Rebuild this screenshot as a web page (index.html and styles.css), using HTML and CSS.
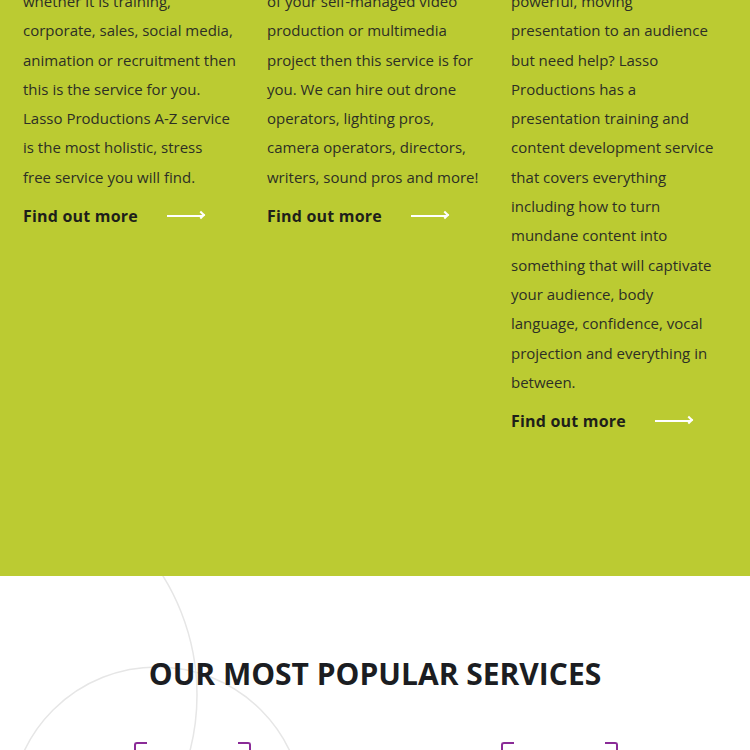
FILE: index.html
```html
<!DOCTYPE html>
<html lang="en">
<head>
<meta charset="utf-8">
<title>Lasso Productions – Services</title>
<link rel="stylesheet" href="styles.css">
</head>
<body>
<section class="green">
  <div class="cols">
    <article class="col">
      <p class="text">whether it is training,<br>corporate, sales, social media,<br>animation or recruitment then<br>this is the service for you.<br>Lasso Productions A-Z service<br>is the most holistic, stress<br>free service you will find.</p>
      <a class="more" href="#">Find out more <span class="arrow"></span></a>
    </article>
    <article class="col">
      <p class="text">of your self-managed video<br>production or multimedia<br>project then this service is for<br>you. We can hire out drone<br>operators, lighting pros,<br>camera operators, directors,<br>writers, sound pros and more!</p>
      <a class="more" href="#">Find out more <span class="arrow"></span></a>
    </article>
    <article class="col">
      <p class="text">powerful, moving<br>presentation to an audience<br>but need help? Lasso<br>Productions has a<br>presentation training and<br>content development service<br>that covers everything<br>including how to turn<br>mundane content into<br>something that will captivate<br>your audience, body<br>language, confidence, vocal<br>projection and everything in<br>between.</p>
      <a class="more" href="#">Find out more <span class="arrow"></span></a>
    </article>
  </div>
</section>
<section class="popular">
  <svg class="deco" width="750" height="260" viewBox="0 576 750 260" aria-hidden="true">
    <circle cx="-28" cy="695" r="225" fill="none" stroke="#e6e6e6" stroke-width="1.5"/>
    <circle cx="157" cy="814" r="147" fill="none" stroke="#e6e6e6" stroke-width="1.5"/>
  </svg>
  <h2 class="title">OUR MOST POPULAR SERVICES</h2>
  <div class="cards">
    <div class="card"><div class="frame"></div></div>
    <div class="card"><div class="frame"></div></div>
  </div>
</section>
</body>
</html>
```
FILE: styles.css
```css
html, body {
  margin: 0;
  padding: 0;
  background: #ffffff;
  overflow: hidden;
}
body {
  font-family: "Open Sans", "Noto Sans", sans-serif;
  color: #2a2c22;
}
.green {
  background: #bbcb32;
  height: 576px;
  overflow: hidden;
}
.cols {
  display: grid;
  grid-template-columns: 220px 220px 220px;
  column-gap: 24px;
  padding-left: 23px;
  margin-top: -13px;
}
.text {
  margin: 0 0 9px;
  font-size: 15px;
  line-height: 29.3px;
  white-space: nowrap;
  color: #2d2f25;
}
.more {
  display: flex;
  align-items: center;
  height: 29px;
  font-weight: 700;
  font-size: 16px;
  color: #1e1f1a;
  text-decoration: none;
  letter-spacing: 0.2px;
}
.arrow {
  position: relative;
  display: block;
  width: 36px;
  height: 2px;
  margin-left: 29px;
  background: #ffffff;
}
.arrow::after {
  content: "";
  position: absolute;
  right: -1px;
  top: -3px;
  width: 6px;
  height: 6px;
  border-top: 2px solid #ffffff;
  border-right: 2px solid #ffffff;
  transform: rotate(45deg);
  box-sizing: border-box;
}
.popular {
  position: relative;
  height: 174px;
  overflow: hidden;
}
.deco {
  position: absolute;
  left: 0;
  top: 0;
}
.title {
  position: relative;
  margin: 0;
  padding-top: 80px;
  text-align: center;
  font-size: 30px;
  line-height: 36px;
  font-weight: 700;
  color: #1b1d22;
  letter-spacing: 0;
}
.cards {
  position: relative;
  display: flex;
  padding-left: 134px;
  gap: 250px;
  margin-top: 50px;
}
.frame {
  width: 117px;
  height: 80px;
  position: relative;
}
.frame::before,
.frame::after {
  content: "";
  position: absolute;
  top: 0;
  width: 11px;
  height: 14px;
  border-top: 2.5px solid #8a2b97;
}
.frame::before {
  left: 0;
  border-left: 2.5px solid #8a2b97;
  border-top-left-radius: 3px;
}
.frame::after {
  right: 0;
  border-right: 2.5px solid #8a2b97;
  border-top-right-radius: 3px;
}
```
